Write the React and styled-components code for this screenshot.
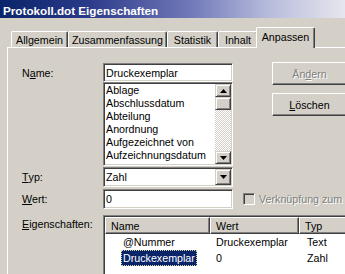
import React from 'react'
import styled, { createGlobalStyle, css } from 'styled-components'

const GlobalStyle = createGlobalStyle`
  html, body {
    margin: 0;
    padding: 0;
    background: #d4d0c8;
  }
  body {
    font-family: 'Liberation Sans', Arial, sans-serif;
    font-size: 10.7px;
    color: #000;
  }
  u {
    text-underline-offset: 1px;
  }
`

// win2000 bevels
const sunken = css`
  box-sizing: border-box;
  border: 1px solid;
  border-color: #808080 #fff #fff #808080;
  box-shadow: inset 1px 1px #404040, inset -1px -1px #d4d0c8;
  padding: 1px;
`

const raised = css`
  box-sizing: border-box;
  background: #d4d0c8;
  border: 1px solid;
  border-color: #d4d0c8 #404040 #404040 #d4d0c8;
  box-shadow: inset 1px 1px #fff, inset -1px -1px #808080;
`

const pushed = css`
  box-sizing: border-box;
  background: #d4d0c8;
  border: 1px solid;
  border-color: #fff #404040 #404040 #fff;
  box-shadow: inset -1px -1px #808080;
`

const Window = styled.div`
  width: 345px;
  height: 274px;
  overflow: hidden;
  background: #d4d0c8;
  display: flex;
  flex-direction: column;
`

const TitleBar = styled.div`
  flex: none;
  height: 18px;
  box-sizing: border-box;
  padding: 2px 0 0 3px;
  display: flex;
  align-items: center;
  background: linear-gradient(to right, #0a246a 0%, #2a3a88 25%, #7078b8 55%, #b8bcdc 78%, #e6e6ee 100%);
  color: #fff;
  font-weight: bold;
  font-size: 11.7px;
  white-space: nowrap;
`

const Body = styled.div`
  flex: 1;
  display: flex;
  flex-direction: column;
  padding: 9px 0 0 7px;
`

const TabStrip = styled.div`
  flex: none;
  height: 20px;
  display: flex;
  align-items: flex-end;
  padding-left: 4px;
`

const Tab = styled.div`
  box-sizing: border-box;
  flex: none;
  width: ${p => p.$w}px;
  height: ${p => (p.$active ? 21 : 16)}px;
  margin: 0 ${p => (p.$active ? -2 : 0)}px ${p => (p.$active ? -1 : 0)}px;
  padding-bottom: ${p => (p.$active ? 2 : 0)}px;
  position: relative;
  z-index: ${p => (p.$active ? 1 : 0)};
  background: #d4d0c8;
  border-top: 1px solid #fff;
  border-left: 1px solid #fff;
  border-right: 1px solid #404040;
  border-radius: 2px 2px 0 0;
  box-shadow: inset -1px 0 #808080;
  display: flex;
  align-items: center;
  justify-content: center;
  white-space: nowrap;
`

const Panel = styled.div`
  flex: 1;
  border-top: 1px solid #fff;
  border-left: 1px solid #fff;
  padding: 15px 0 0 14px;
  display: flex;
  flex-direction: column;
`

const TopSection = styled.div`
  display: flex;
`

const Row = styled.div`
  display: flex;
  align-items: ${p => p.$align || 'center'};
  margin-top: ${p => p.$gap || 0}px;
`

const Label = styled.div`
  flex: none;
  width: 81px;
  height: ${p => p.$h || 19}px;
  display: flex;
  align-items: center;
  white-space: nowrap;
`

const FieldCol = styled.div`
  flex: none;
  width: 130px;
  display: flex;
  flex-direction: column;
`

const TextBox = styled.div`
  ${sunken};
  flex: none;
  width: 130px;
  height: ${p => p.$h || 20}px;
  background: #fff;
  display: flex;
  align-items: center;
  padding-left: 2px;
  white-space: nowrap;
`

const ListBox = styled.div`
  ${sunken};
  flex: none;
  width: 130px;
  height: 84px;
  background: #fff;
  display: flex;
`

const Items = styled.div`
  flex: 1;
  overflow: hidden;
  padding-left: 1px;
  white-space: nowrap;
`

const Item = styled.div`
  height: 13px;
  line-height: 13px;
`

const ScrollBar = styled.div`
  flex: none;
  width: 16px;
  display: flex;
  flex-direction: column;
  background: repeating-conic-gradient(#fff 0 25%, #d4d0c8 0 50%) 0 0 / 2px 2px;
`

const ArrowBtn = styled.div`
  ${raised};
  flex: none;
  width: 16px;
  height: ${p => p.$h || 13}px;
  display: flex;
  align-items: center;
  justify-content: center;
`

const Track = styled.div`
  flex: 1;
`

const ButtonCol = styled.div`
  flex: none;
  margin: -1px 0 0 39px;
  display: flex;
  flex-direction: column;
  gap: 8px;
`

const PushButton = styled.div`
  ${pushed};
  flex: none;
  width: 75px;
  height: 23px;
  display: flex;
  align-items: center;
  justify-content: center;
  color: ${p => (p.$disabled ? '#808080' : '#000')};
  text-shadow: ${p => (p.$disabled ? '1px 1px #fff' : 'none')};
`

const Combo = styled.div`
  ${sunken};
  flex: none;
  width: 130px;
  height: 20px;
  background: #fff;
  display: flex;
  align-items: center;
`

const ComboText = styled.div`
  flex: 1;
  padding-left: 1px;
`

const CheckArea = styled.div`
  flex: none;
  display: flex;
  align-items: center;
  gap: 4px;
  margin-left: 10px;
  white-space: nowrap;
  color: #808080;
  text-shadow: 1px 1px #fff;
`

const CheckBox = styled.div`
  ${sunken};
  flex: none;
  width: 12px;
  height: 12px;
  background: #d4d0c8;
`

const ListView = styled.div`
  ${sunken};
  flex: none;
  width: 262px;
  height: 70px;
  background: #fff;
  display: flex;
  flex-direction: column;
`

const HeaderRow = styled.div`
  display: flex;
  height: 17px;
`

const HeaderCell = styled.div`
  ${pushed};
  flex: none;
  width: ${p => p.$w}px;
  height: 17px;
  padding-left: 5px;
  display: flex;
  align-items: center;
`

const DataRow = styled.div`
  display: flex;
  height: 16px;
  align-items: center;
  white-space: nowrap;
  &:first-of-type {
    margin-top: 1px;
  }
`

const Cell = styled.div`
  flex: none;
  width: ${p => p.$w}px;
  padding-left: ${p => p.$pad}px;
  box-sizing: border-box;
`

const NameText = styled.span`
  display: inline-block;
  height: 16px;
  line-height: 16px;
  padding: 0 2px;
  box-sizing: border-box;
  ${p =>
    p.$selected &&
    css`
      background: #0a246a;
      color: #fff;
      outline: 1px dotted #d8d8a0;
      outline-offset: -1px;
    `}
`

const Arrow = ({ down }) => (
  <svg width='7' height='4' viewBox='0 0 7 4'>
    <polygon points={down ? '0,0 7,0 3.5,4' : '0,4 7,4 3.5,0'} fill='#000' />
  </svg>
)

const listItems = ['Ablage', 'Abschlussdatum', 'Abteilung', 'Anordnung', 'Aufgezeichnet von', 'Aufzeichnungsdatum']

const tabs = [
  { label: 'Allgemein', w: 57 },
  { label: 'Zusammenfassung', w: 99 },
  { label: 'Statistik', w: 51 },
  { label: 'Inhalt', w: 40 },
  { label: 'Anpassen', w: 59, active: true },
]

const props = [
  { name: '@Nummer', value: 'Druckexemplar', type: 'Text' },
  { name: 'Druckexemplar', value: '0', type: 'Zahl', selected: true },
]

export default function App() {
  return (
    <>
      <GlobalStyle />
      <Window>
        <TitleBar>Protokoll.dot Eigenschaften</TitleBar>
        <Body>
          <TabStrip>
            {tabs.map(t => (
              <Tab key={t.label} $w={t.w} $active={t.active}>
                {t.label}
              </Tab>
            ))}
          </TabStrip>
          <Panel>
            <TopSection>
              <Label>
                N<u>a</u>me:
              </Label>
              <FieldCol>
                <TextBox $h={19}>Druckexemplar</TextBox>
                <ListBox>
                  <Items>
                    {listItems.map(item => (
                      <Item key={item}>{item}</Item>
                    ))}
                  </Items>
                  <ScrollBar>
                    <ArrowBtn>
                      <Arrow />
                    </ArrowBtn>
                    <ArrowBtn />
                    <Track />
                    <ArrowBtn>
                      <Arrow down />
                    </ArrowBtn>
                  </ScrollBar>
                </ListBox>
              </FieldCol>
              <ButtonCol>
                <PushButton $disabled>
                  <span>
                    Än<u>d</u>ern
                  </span>
                </PushButton>
                <PushButton>
                  <span>
                    <u>L</u>öschen
                  </span>
                </PushButton>
              </ButtonCol>
            </TopSection>

            <Row $gap={1}>
              <Label $h={20}>
                <u>T</u>yp:
              </Label>
              <Combo>
                <ComboText>Zahl</ComboText>
                <ArrowBtn $h={16}>
                  <Arrow down />
                </ArrowBtn>
              </Combo>
            </Row>

            <Row $gap={2}>
              <Label $h={20}>
                <u>W</u>ert:
              </Label>
              <TextBox>0</TextBox>
              <CheckArea>
                <CheckBox />
                <span>Verknüpfung zum</span>
              </CheckArea>
            </Row>

            <Row $gap={6} $align='flex-start'>
              <Label $h={17}>
                <u>E</u>igenschaften:
              </Label>
              <ListView>
                <HeaderRow>
                  <HeaderCell $w={105}>Name</HeaderCell>
                  <HeaderCell $w={89}>Wert</HeaderCell>
                  <HeaderCell $w={70}>Typ</HeaderCell>
                </HeaderRow>
                {props.map(p => (
                  <DataRow key={p.name}>
                    <Cell $w={105} $pad={16}>
                      <NameText $selected={p.selected}>{p.name}</NameText>
                    </Cell>
                    <Cell $w={89} $pad={6}>
                      {p.value}
                    </Cell>
                    <Cell $w={70} $pad={8}>
                      {p.type}
                    </Cell>
                  </DataRow>
                ))}
              </ListView>
            </Row>
          </Panel>
        </Body>
      </Window>
    </>
  )
}
